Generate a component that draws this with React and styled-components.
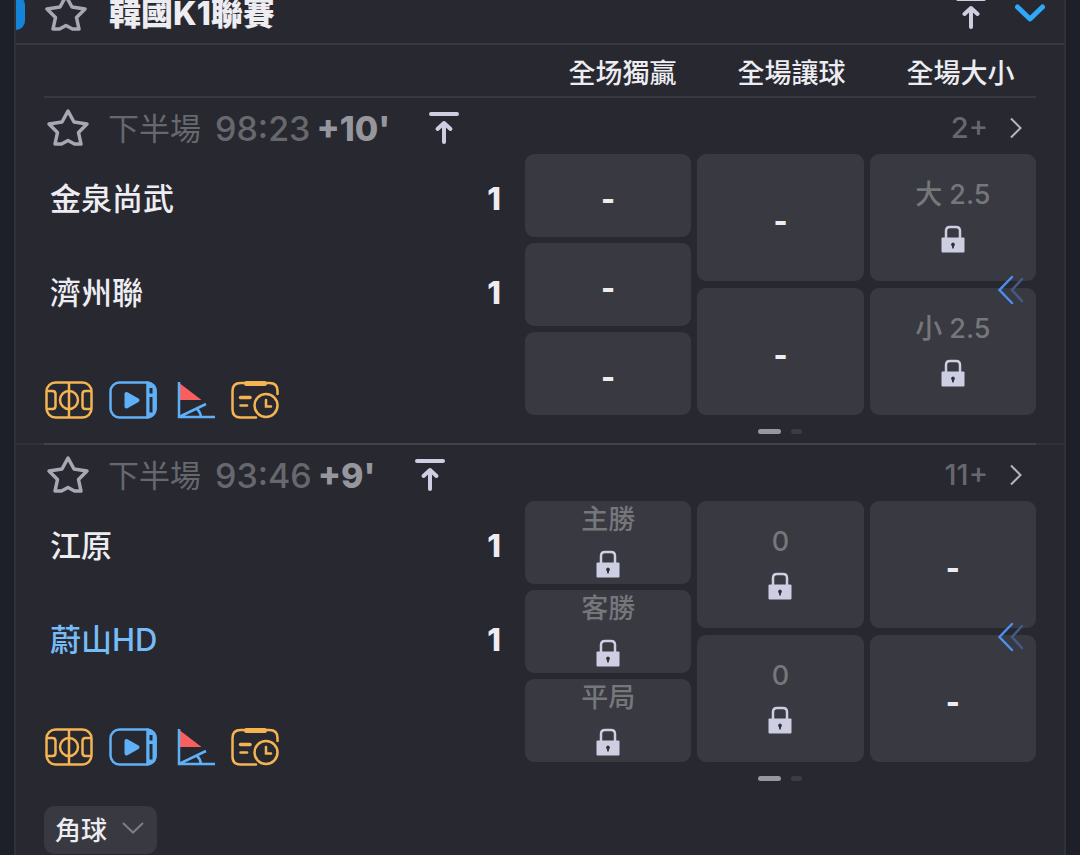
import React from 'react'
import styled, {createGlobalStyle} from 'styled-components'

const theme = {
  page: '#1d2028',
  panel: '#282831',
  tile: '#393941',
  line: '#383941',
  lineFaint: '#303139',
  text: '#ededf1',
  textDimmed: '#67686e',
  textMuted: '#76777b',
  icon: '#cdcee1',
  star: '#a6a8b4',
  blue: '#5fb0f7',
  orange: '#f5b452'
}

const matches = [
  {
    id: 1,
    clock: '98:23',
    extra: "+10'",
    more: '2+',
    teams: [{name: '金泉尚武', score: 1}, {name: '濟州聯', score: 1}],
    columns: [
      [null, null, null],
      [null, null],
      ['大 2.5', '小 2.5']
    ]
  },
  {
    id: 2,
    clock: '93:46',
    extra: "+9'",
    more: '11+',
    teams: [{name: '江原', score: 1}, {name: '蔚山HD', score: 1, highlighted: true}],
    columns: [
      ['主勝', '客勝', '平局'],
      ['0', '0'],
      [null, null]
    ]
  }
]

const StarIcon = () => (
  <svg width="44" height="40" viewBox="0 0 44 40" fill="none" stroke={theme.star} strokeWidth="3.500" strokeLinejoin="round" aria-hidden="true">
    <path d="M22 3 L28 14 L41 16 L32.500 24.500 L35 36 L28.500 36 L22 32.500 L15.500 36 L9 36 L11.500 24.500 L3 16 L16 14 Z" />
  </svg>
)

const ToTopIcon = () => (
  <svg width="30" height="34" viewBox="0 0 30 34" fill="none" stroke={theme.icon} strokeWidth="4" strokeLinecap="round" strokeLinejoin="round" aria-hidden="true">
    <path d="M2 3H28M15 31V12M8.500 18L15 12L21.500 18" />
  </svg>
)

const LockIcon = () => (
  <svg width="24" height="28" viewBox="0 0 24 28" aria-hidden="true">
    <path d="M5 13V6Q5 2 9 2H15Q19 2 19 6V13" fill="none" stroke={theme.icon} strokeWidth="2.500" />
    <rect x="0.500" y="12.500" width="23" height="15" rx="1" fill={theme.icon} />
    <path d="M12 17.500a2 2 0 0 1 1.100 3.600L12.700 23.500H11.300L10.900 21.100A2 2 0 0 1 12 17.500Z" fill="#303038" />
  </svg>
)

const PitchIcon = () => (
  <svg width="48" height="40" viewBox="0 0 48 40" fill="none" stroke={theme.orange} strokeWidth="2.500" aria-hidden="true">
    <rect x="1.500" y="2.500" width="45" height="35" rx="9" />
    <path d="M24 2.500V37.500M1.500 11H7.500Q10.500 11 10.500 14V26Q10.500 29 7.500 29H1.500M46.500 11H40.500Q37.500 11 37.500 14V26Q37.500 29 40.500 29H46.500" />
    <circle cx="24" cy="20" r="9" />
  </svg>
)

const VideoIcon = () => (
  <svg width="48" height="40" viewBox="0 0 48 40" fill="none" stroke={theme.blue} strokeWidth="2.500" strokeLinejoin="round" aria-hidden="true">
    <rect x="1.500" y="2.500" width="45" height="35" rx="9" />
    <path d="M38.500 2.500Q46.500 4 46.500 11.500V28.500Q46.500 36 38.500 37.500Z" fill={theme.blue} />
    <path d="M40.500 8H43.500V13.500H40.500ZM40.500 17H43.500V32.500H40.500Z" fill={theme.panel} stroke="none" />
    <path d="M17.500 14V26.500L28.500 20.200Z" fill={theme.blue} strokeWidth="4" />
  </svg>
)

const CornerIcon = () => (
  <svg width="42" height="40" viewBox="0 0 42 40" fill="none" stroke={theme.blue} strokeWidth="2.500" aria-hidden="true">
    <path d="M7 3.500L28.500 20H7Z" fill="#f8605f" stroke="none" />
    <path d="M6 2V37H43M6 37L33 24M23.500 28.500Q27.500 32 28 37" />
  </svg>
)

const TimelineIcon = () => (
  <svg width="48" height="40" viewBox="0 0 48 40" fill="none" stroke={theme.orange} strokeWidth="2.500" strokeLinecap="round" aria-hidden="true">
    <path d="M25 37.500H9.500Q1.500 37.500 1.500 29.500V11Q1.500 3 9.500 3H38.500Q46.500 3 46.500 11V14" />
    <path d="M15.500 3.500H33.500" strokeWidth="5" />
    <path d="M9.500 17.500H19" strokeWidth="3.500" />
    <path d="M9.500 25.500H16" />
    <circle cx="35" cy="25.500" r="11.500" />
    <path d="M35 20V26.500H40" />
  </svg>
)

const ChevronRight = () => (
  <svg width="12" height="22" viewBox="0 0 12 22" fill="none" stroke="#b4b5be" strokeWidth="2" aria-hidden="true">
    <path d="M1 1.500L10.500 11L1 20.500" />
  </svg>
)

const ChevronDown = () => (
  <svg width="22" height="12" viewBox="0 0 22 12" fill="none" stroke="#7c7d84" strokeWidth="2" aria-hidden="true">
    <path d="M1 1L11 10.500L21 1" />
  </svg>
)

const CollapseIcon = () => (
  <svg width="32" height="20" viewBox="0 0 32 20" fill="none" stroke="#2ea8fb" strokeWidth="5" strokeLinecap="round" strokeLinejoin="round" aria-hidden="true">
    <path d="M3.500 4L16 16L28.500 4" />
  </svg>
)

const SwipeIcon = () => (
  <svg width="28" height="30" viewBox="0 0 28 30" fill="none" strokeWidth="2.500" strokeLinecap="round" aria-hidden="true">
    <path d="M25 4L15 15L25 26" stroke="#445a84" />
    <path d="M15 2L2.500 15L15 28" stroke="#4d8fec" />
  </svg>
)

const Tile = ({label}) => (
  <TileRoot aria-label={label ? `${label} 鎖定` : undefined}>
    {label ? (
      <>
        <TileLabel>{label}</TileLabel>
        <LockIcon />
      </>
    ) : <Dash>-</Dash>}
  </TileRoot>
)

const Match = ({match}) => (
  <MatchRoot>
    <MatchTop>
      <IconButton aria-label="收藏"><StarIcon /></IconButton>
      <Clock>
        <Period>下半場</Period>
        <span>{match.clock}</span>
        <Extra>{match.extra}</Extra>
      </Clock>
      <IconButton aria-label="置頂"><ToTopIcon /></IconButton>
      <More href="#more">
        {match.more}
        <ChevronRight />
      </More>
    </MatchTop>
    <MatchBody>
      <Info>
        {match.teams.map(team => (
          <Team key={team.name} $highlighted={team.highlighted}>
            {team.name}
            <Score>{team.score}</Score>
          </Team>
        ))}
        <Tools>
          <IconButton aria-label="陣容"><PitchIcon /></IconButton>
          <IconButton aria-label="直播"><VideoIcon /></IconButton>
          <IconButton aria-label="角球數"><CornerIcon /></IconButton>
          <IconButton aria-label="賽程"><TimelineIcon /></IconButton>
        </Tools>
      </Info>
      <Odds>
        {match.columns.map((column, i) => (
          <OddsColumn key={i} $gap={column.length === 3 ? 6 : 7}>
            {column.map((label, j) => <Tile key={j} label={label} />)}
          </OddsColumn>
        ))}
        <Swipe><SwipeIcon /></Swipe>
      </Odds>
      <Pager>
        <PagerDot $active />
        <PagerDot />
      </Pager>
    </MatchBody>
  </MatchRoot>
)

const App = () => (
  <Page>
    <GlobalStyle />
    <Panel>
      <LeagueHeader>
        <IconButton aria-label="收藏"><StarIcon /></IconButton>
        <LeagueName>韓國K1聯賽</LeagueName>
        <IconButton aria-label="置頂"><ToTopIcon /></IconButton>
        <IconButton aria-label="收起"><CollapseIcon /></IconButton>
      </LeagueHeader>
      <ColumnHeads>
        <span>全场獨贏</span>
        <span>全場讓球</span>
        <span>全場大小</span>
      </ColumnHeads>
      <Divider />
      <Match match={matches[0]} />
      <Divider $fullWidth />
      <Match match={matches[1]} />
      <Footer>
        <CornerToggle aria-expanded="false">
          角球
          <ChevronDown />
        </CornerToggle>
      </Footer>
    </Panel>
  </Page>
)

const GlobalStyle = createGlobalStyle`
  * {
    box-sizing: border-box;
  }

  body {
    margin: 0;
    background: ${theme.page};
    color: ${theme.text};
    font-family: Inter, 'Noto Sans CJK TC', sans-serif;
  }

  button {
    font-family: inherit;
    color: inherit;
    border: 0;
    cursor: pointer;
  }

  svg {
    display: block;
    flex-shrink: 0;
  }
`

const Page = styled.main`
  display: flex;
  min-height: 100vh;
  padding: 0 14px;
  overflow: hidden;
`

/* the list is scrolled a little under the top edge */
const Panel = styled.section`
  flex: 1;
  min-width: 0;
  margin-top: -17px;
  background: ${theme.panel};
  border: solid ${theme.lineFaint};
  border-width: 0 2px;
`

const IconButton = styled.button`
  display: flex;
  padding: 0;
  background: none;
`

const LeagueHeader = styled.header`
  position: relative;
  display: flex;
  align-items: center;
  height: 62px;
  padding: 0 18px 0 28px;
  gap: 28px;
  border-bottom: 2px solid ${theme.line};

  &::before {
    content: '';
    position: absolute;
    left: 0;
    top: 13px;
    bottom: 13px;
    width: 9px;
    border-radius: 0 9px 9px 0;
    background: #1583d8;
  }
`

const LeagueName = styled.h1`
  flex: 1;
  margin: 0 0 0 -7px;
  padding-top: 2px;
  font-size: 32px;
  font-weight: 800;
  line-height: 36px;
`

const ColumnHeads = styled.div`
  display: grid;
  grid-template-columns: repeat(3, 169px);
  justify-content: end;
  align-items: center;
  height: 51px;
  margin: 0 19px 0 28px;
  padding-top: 6px;
  font-size: 27px;
  font-weight: 500;
  line-height: 36px;
  text-align: center;
`

const MatchRoot = styled.article`
  padding: 0 28px;
`

const MatchTop = styled.div`
  display: flex;
  align-items: center;
  height: 56px;
  padding: 4px 14px 0 2px;
`

const Clock = styled.div`
  display: flex;
  align-items: center;
  margin: 0 39px 0 18px;
  padding-top: 2px;
  color: ${theme.textDimmed};
  font-size: 34px;
  font-weight: 500;
  line-height: 40px;
`

const Period = styled.span`
  margin-right: 14px;
  font-size: 31px;
  font-weight: 400;
`

const Extra = styled.strong`
  margin-left: 6px;
  color: #96979d;
  font-weight: 800;
`

const More = styled.a`
  display: flex;
  align-items: center;
  gap: 22px;
  margin-left: auto;
  color: ${theme.textDimmed};
  font-size: 29px;
  font-weight: 500;
  line-height: 36px;
  text-decoration: none;
`

const MatchBody = styled.div`
  display: grid;
  grid-template-columns: minmax(0, 16fr) minmax(0, 17fr);
  grid-template-rows: 261px 28px;
`

const Info = styled.div`
  display: flex;
  flex-direction: column;
  grid-row: span 2;
  gap: 4px;
`

const Team = styled.div`
  display: flex;
  flex-shrink: 0;
  align-items: center;
  justify-content: space-between;
  height: 90px;
  padding: 0 24px 0 6px;
  color: ${props => props.$highlighted ? '#76bdf8' : theme.text};
  font-size: 31px;
  font-weight: 500;
  line-height: 40px;
`

const Score = styled.strong`
  color: ${theme.text};
  font-weight: 800;
`

const Tools = styled.div`
  display: flex;
  gap: 16px;
  padding: 38px 0 0 1px;
`

const Odds = styled.div`
  position: relative;
  display: grid;
  grid-template-columns: repeat(3, minmax(0, 1fr));
  gap: 6px;
`

const OddsColumn = styled.div`
  display: flex;
  flex-direction: column;
  gap: ${props => props.$gap}px;
`

const TileRoot = styled.button`
  display: flex;
  flex: 1;
  flex-direction: column;
  align-items: center;
  justify-content: center;
  gap: 16px;
  min-height: 0;
  padding: 0 0 2px;
  border-radius: 9px;
  background: ${theme.tile};
`

const Dash = styled.span`
  padding-top: 8px;
  font-size: 30px;
  font-weight: 800;
  line-height: 36px;
`

const TileLabel = styled.span`
  color: ${theme.textMuted};
  font-size: 27px;
  font-weight: 500;
  line-height: 28px;
`

const Swipe = styled.span`
  position: absolute;
  top: 121px;
  right: 11px;
`

const Pager = styled.div`
  display: flex;
  grid-column: 2;
  justify-content: center;
  gap: 10px;
  padding-top: 14px;
`

const PagerDot = styled.span`
  width: ${props => props.$active ? 23 : 11}px;
  height: 5px;
  border-radius: 3px;
  background: ${props => props.$active ? '#96979f' : '#3b3c44'};
`

const Divider = styled.div`
  padding: 0 28px;
  background: ${props => props.$fullWidth ? theme.lineFaint : 'none'};

  &::after {
    content: '';
    display: block;
    height: 2px;
    background: ${props => props.$fullWidth ? '#41424a' : theme.line};
  }
`

const Footer = styled.footer`
  padding: 16px 28px 0;
`

const CornerToggle = styled.button`
  display: flex;
  align-items: center;
  gap: 15px;
  height: 48px;
  padding: 0 13px 4px 11px;
  border-radius: 10px;
  background: ${theme.tile};
  font-size: 26px;
  font-weight: 500;
`

export default App
